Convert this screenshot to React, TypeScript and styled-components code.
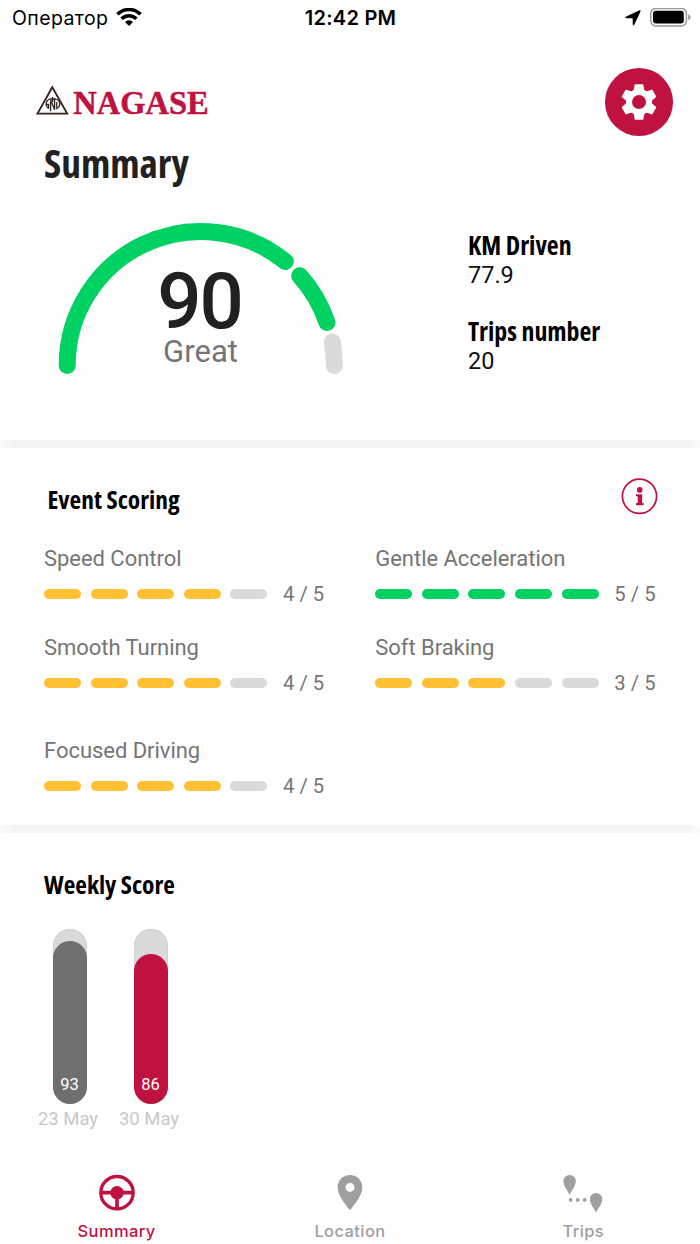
import React from "react";
import styled, { createGlobalStyle } from "styled-components";

const crimson = "#bf1241";
const green = "#00d163";
const amber = "#ffc033";
const track = "#dadada";

const GlobalStyle = createGlobalStyle`
  * { box-sizing: border-box; }
  body { margin: 0; background: #fff; font-family: Roboto, "Noto Sans", sans-serif; }
  h1, h2, h3, p { margin: 0; }
`;

const Screen = styled.div`
  width: 700px;
  height: 1244px;
  overflow: hidden;
  display: flex;
  flex-direction: column;
  background: #fefefe;
`;

const StatusBar = styled.div`
  height: 36px;
  display: grid;
  grid-template-columns: 1fr auto 1fr;
  align-items: center;
  padding: 0 9px 0 12px;
  background: #fff;
  font-family: Inter, "Noto Sans", sans-serif;
  font-size: 19.5px;
  line-height: 36px;
  color: #000;
`;

const Carrier = styled.div`
  display: flex;
  align-items: center;
  gap: 8px;
  letter-spacing: 0.4px;
`;

const Clock = styled.div`
  font-weight: 600;
  font-size: 20px;
  letter-spacing: 0.25px;
  margin-right: 2px;
`;

const StatusIcons = styled.div`
  display: flex;
  align-items: center;
  justify-content: flex-end;
  gap: 9px;
`;

const Header = styled.header`
  height: 98px;
  flex: none;
  display: flex;
  justify-content: space-between;
  align-items: flex-start;
  padding: 32px 27px 0 36px;
  background: #fff;
`;

const Logo = styled.svg`
  margin-top: 16px;
  overflow: visible;
`;

const SettingsButton = styled.button`
  width: 68px;
  height: 67.5px;
  padding: 0;
  border: 0;
  border-radius: 50%;
  display: grid;
  place-items: center;
  background: ${crimson};
  color: #fff;
`;

const Heading = styled.h2<{ $size?: number; $tone?: string }>`
  font-family: "Open Sans", sans-serif;
  font-stretch: 75%;
  font-weight: 700;
  font-size: ${(p) => p.$size ?? 25.4}px;
  line-height: ${(p) => (p.$size && p.$size > 30 ? 48 : 32)}px;
  color: ${(p) => p.$tone ?? "#000"};
  white-space: nowrap;
`;

const SummarySection = styled.section`
  height: 306px;
  flex: none;
  padding: 5px 44px 0;
`;

const SummaryBody = styled.div`
  display: flex;
  justify-content: space-between;
  padding: 29px 0 0 6px;
`;

const Gauge = styled.div`
  position: relative;
  width: 301px;
  height: 170px;
`;

const GaugeLabel = styled.div`
  position: absolute;
  inset: 56px 0 0;
  display: flex;
  flex-direction: column;
  align-items: center;
`;

const Score = styled.div`
  font-weight: 500;
  font-size: 78px;
  line-height: 60px;
  letter-spacing: -2px;
  padding-right: 2px;
  color: #212121;
`;

const Verdict = styled.div`
  font-size: 31px;
  line-height: 36px;
  margin-top: 2px;
  color: #757575;
`;

const Stats = styled.div`
  width: 188px;
  padding-top: 13px;
  display: flex;
  flex-direction: column;
  gap: 25.5px;
`;

const StatValue = styled.p`
  font-size: 23.5px;
  line-height: 28px;
  color: #111;
`;

const Divider = styled.div`
  height: 8px;
  flex: none;
  background: linear-gradient(90deg, #fafafa, #f4f4f4 14px, #f4f4f4 686px, #fafafa);
`;

const EventSection = styled.section`
  height: 377px;
  flex: none;
  padding: 30px 42px 0 44px;
`;

const SectionHead = styled.div`
  display: flex;
  justify-content: space-between;
  height: 66px;
  padding-left: 3.5px;
`;

const HeadTitle = styled.div`
  padding-top: 5px;
`;

const EventGrid = styled.div`
  display: grid;
  grid-template-columns: 331.3px 1fr;
  grid-template-rows: 88.5px 103.5px 60px;
`;

const EventName = styled.div`
  font-size: 22px;
  line-height: 30px;
  letter-spacing: -0.04px;
  color: #757575;
`;

const Meter = styled.div`
  display: flex;
  align-items: center;
  height: 28px;
  margin-top: 6px;
`;

const Segment = styled.i<{ $fill: string }>`
  flex: none;
  width: 37px;
  height: 10px;
  margin-right: 9.6px;
  border-radius: 5px;
  background: ${(p) => p.$fill};
`;

const Fraction = styled.span`
  margin-left: 6px;
  font-size: 20.2px;
  letter-spacing: 0.05px;
  color: #757575;
  white-space: nowrap;
`;

const WeeklySection = styled.section`
  height: 327px;
  flex: none;
  padding: 35px 33px 0;
`;

const WeeklyTitle = styled.div`
  padding-left: 11px;
`;

const Weeks = styled.div`
  display: flex;
  gap: 11px;
  margin-top: 29px;
`;

const Week = styled.div`
  width: 70px;
  display: flex;
  flex-direction: column;
  align-items: center;
`;

const BarTrack = styled.div`
  width: 34px;
  height: 175px;
  margin-left: 3px;
  display: flex;
  align-items: flex-end;
  border-radius: 17px;
  background: ${track};
  box-shadow: inset 0 0 0 1px #d0d0d0;
`;

const BarFill = styled.div<{ $tone: string }>`
  width: 100%;
  display: flex;
  align-items: flex-end;
  justify-content: center;
  padding-bottom: 9px;
  border-radius: 17px;
  background: ${(p) => p.$tone};
  color: #fff;
  font-size: 16.5px;
  line-height: 20px;
`;

const WeekDate = styled.div`
  margin-top: 3px;
  font-size: 18.5px;
  line-height: 25px;
  color: #c8c8c8;
  white-space: nowrap;
`;

const TabBar = styled.nav`
  flex: 1;
  display: grid;
  grid-template-columns: repeat(3, 1fr);
  padding-top: 13px;
  background: #fefefe;
`;

const Tab = styled.a<{ $active?: boolean }>`
  display: flex;
  flex-direction: column;
  align-items: center;
  color: ${(p) => (p.$active ? crimson : "#9f9f9f")};
  font-family: Inter, sans-serif;
  font-weight: 500;
  font-size: 16.5px;
  line-height: 22px;
  letter-spacing: 0.4px;

  svg { margin-bottom: 7px; }
`;

const events = [
  { name: "Speed Control", score: 4 },
  { name: "Gentle Acceleration", score: 5 },
  { name: "Smooth Turning", score: 4 },
  { name: "Soft Braking", score: 3 },
  { name: "Focused Driving", score: 4 },
];

const weeks = [
  { date: "23 May", score: 93, tone: "#6f6f6f" },
  { date: "30 May", score: 86, tone: crimson },
];

const WifiIcon = () => (
  <svg width="26" height="20" viewBox="0 0 26 20" fill="none" stroke="#000" strokeWidth="3.5">
    <path d="M1.400 6.300a16.600 16.600 0 0 1 23.200 0" />
    <path d="M5.600 10.800a10.600 10.600 0 0 1 14.800 0" />
    <path d="M13 18.100l-4-4.200a5.800 5.800 0 0 1 8 0z" fill="#000" stroke="none" />
  </svg>
);

const ArrowIcon = () => (
  <svg width="16" height="16" viewBox="0 0 16 16">
    <path d="M14.500.3Q16 0 15.500 1.500L9.300 14.700Q8.300 16 7.700 14.500V8.700Q7.700 8.200 7.200 8.200H1.100Q-.4 7.800.8 6.800Z" />
  </svg>
);

const BatteryIcon = () => (
  <svg width="41" height="20" viewBox="0 0 41 20">
    <rect x=".8" y=".5" width="35.600" height="17.400" rx="5" fill="none" stroke="#999" strokeWidth="1.500" />
    <rect x="3" y="2.800" width="30.800" height="12.800" rx="3" />
    <path d="M38.200 6.200v6q2.300-1 2.300-3t-2.300-3z" fill="#999" />
  </svg>
);

const GearIcon = () => (
  <svg width="38" height="38" viewBox="-19 -19 38 38" fill="currentColor">
    {[0, 60, 120, 180, 240, 300].map((angle) => (
      <path
        key={angle}
        transform={`rotate(${angle})`}
        d="M-3.600-17.700H3.600Q4.300-17.700 4.400-17L5.200-12.400L7-10.500V0H-7V-10.500L-5.200-12.400L-4.400-17Q-4.300-17.700-3.600-17.700Z"
      />
    ))}
    <circle r="7" fill={crimson} />
  </svg>
);

const BrandLogo = () => (
  <Logo width="174" height="34" viewBox="0 0 174 34">
    <path d="M16.300 3.200L31.200 29.600H1.500Z" fill="none" stroke="#30241f" strokeWidth="1.800" />
    <g fill="none" stroke="#30241f" strokeWidth="1.300">
      <path d="M14.600 27.200V17.500M14.600 15.800L18.600 25.800V14.500" />
      <path d="M12.600 24.500V20.500H10.200Q10 16.500 13.800 15H19.500Q23.800 16.500 23.800 20Q23.500 23.600 20.800 24.500V18" />
      <path d="M10.200 20.500Q10.400 23 12.600 24.500M16.600 13V18" />
    </g>
    <text x="37.200" y="29.700" textLength="135.500" lengthAdjust="spacingAndGlyphs" fontFamily="Liberation Serif, serif" fontWeight="700" fontSize="33" fill={crimson} stroke={crimson} strokeWidth=".5">
      NAGASE
    </text>
  </Logo>
);

const GaugeArc = () => (
  <svg width="301" height="170" viewBox="50 216 301 170" fill="none" strokeWidth="17" strokeLinecap="round">
    <path d="M67.200 365.500A133.700 133.700 0 0 1 285.300 261.500" stroke={green} />
    <path d="M299.700 275.700A133.700 133.700 0 0 1 327 322.500" stroke={green} />
    <path d="M332.300 341.900A133.700 133.700 0 0 1 334.400 365.500" stroke={track} />
  </svg>
);

const InfoIcon = () => (
  <svg width="37" height="37" viewBox="0 0 37 37">
    <circle cx="18.500" cy="18.300" r="17.100" fill="none" stroke={crimson} strokeWidth="1.700" />
    <circle cx="18.700" cy="11.900" r="2.800" fill={crimson} />
    <path d="M15 16.200h6.100v8.900h1.500v2.100h-7.600v-2.100h1.700v-6.800H15z" fill={crimson} />
  </svg>
);

const WheelIcon = () => (
  <svg width="36" height="40" viewBox="0 0 36 40" fill="none" stroke="currentColor">
    <circle cx="18" cy="19.700" r="16.200" strokeWidth="3.300" />
    <path d="M2 19.700h32M18 20v16" strokeWidth="3.700" />
    <circle cx="18" cy="19.700" r="6.800" fill="currentColor" stroke="none" />
  </svg>
);

const PinIcon = () => (
  <svg width="26" height="40" viewBox="0 0 26 40" fill="currentColor">
    <path fillRule="evenodd" d="M13 1.900C6 1.900.6 7.300.6 14.200.6 23 10 33 13 37.300 16 33 25.400 23 25.400 14.200 25.400 7.300 20 1.900 13 1.900ZM13 9.900a4.500 4.500 0 1 1 0 9 4.500 4.500 0 0 1 0-9Z" />
  </svg>
);

const TripsIcon = () => (
  <svg width="40" height="40" viewBox="0 0 40 40" fill="currentColor">
    <path d="M6.600 1.900A6.200 6.200 0 0 0 .4 8.200C.4 13 5.200 18.400 6.600 21.700 8 18.400 12.800 13 12.800 8.200A6.200 6.200 0 0 0 6.600 1.900Z" />
    <path d="M33.100 19.900a6.200 6.200 0 0 0-6.200 6.300c0 4.800 4.800 9.900 6.200 13.200 1.400-3.300 6.200-8.400 6.200-13.200a6.200 6.200 0 0 0-6.200-6.300Z" />
    <circle cx="7.700" cy="26.900" r="1.900" />
    <circle cx="14.700" cy="26.900" r="1.900" />
    <circle cx="21.700" cy="26.900" r="1.900" />
  </svg>
);

const EventMeter = ({ name, score }: { name: string; score: number }) => (
  <div>
    <EventName>{name}</EventName>
    <Meter>
      {[1, 2, 3, 4, 5].map((n) => (
        <Segment key={n} $fill={n > score ? track : score === 5 ? green : amber} />
      ))}
      <Fraction>{score} / 5</Fraction>
    </Meter>
  </div>
);

export default function App() {
  return (
    <Screen>
      <GlobalStyle />
      <StatusBar>
        <Carrier>
          <span>Оператор</span>
          <WifiIcon />
        </Carrier>
        <Clock>12:42 PM</Clock>
        <StatusIcons>
          <ArrowIcon />
          <BatteryIcon />
        </StatusIcons>
      </StatusBar>
      <Header>
        <BrandLogo />
        <SettingsButton aria-label="Settings">
          <GearIcon />
        </SettingsButton>
      </Header>
      <SummarySection>
        <Heading as="h1" $size={39.3} $tone="#212121">Summary</Heading>
        <SummaryBody>
          <Gauge>
            <GaugeArc />
            <GaugeLabel>
              <Score>90</Score>
              <Verdict>Great</Verdict>
            </GaugeLabel>
          </Gauge>
          <Stats>
            <div>
              <Heading as="h3" $size={25.8}>KM Driven</Heading>
              <StatValue>77.9</StatValue>
            </div>
            <div>
              <Heading as="h3" $size={25.8}>Trips number</Heading>
              <StatValue>20</StatValue>
            </div>
          </Stats>
        </SummaryBody>
      </SummarySection>
      <Divider />
      <EventSection>
        <SectionHead>
          <HeadTitle>
            <Heading>Event Scoring</Heading>
          </HeadTitle>
          <InfoIcon />
        </SectionHead>
        <EventGrid>
          {events.map((e) => (
            <EventMeter key={e.name} {...e} />
          ))}
        </EventGrid>
      </EventSection>
      <Divider />
      <WeeklySection>
        <WeeklyTitle>
          <Heading>Weekly Score</Heading>
        </WeeklyTitle>
        <Weeks>
          {weeks.map((w) => (
            <Week key={w.date}>
              <BarTrack>
                <BarFill $tone={w.tone} style={{ height: `${w.score}%` }}>{w.score}</BarFill>
              </BarTrack>
              <WeekDate>{w.date}</WeekDate>
            </Week>
          ))}
        </Weeks>
      </WeeklySection>
      <TabBar>
        <Tab $active><WheelIcon />Summary</Tab>
        <Tab><PinIcon />Location</Tab>
        <Tab><TripsIcon />Trips</Tab>
      </TabBar>
    </Screen>
  );
}
